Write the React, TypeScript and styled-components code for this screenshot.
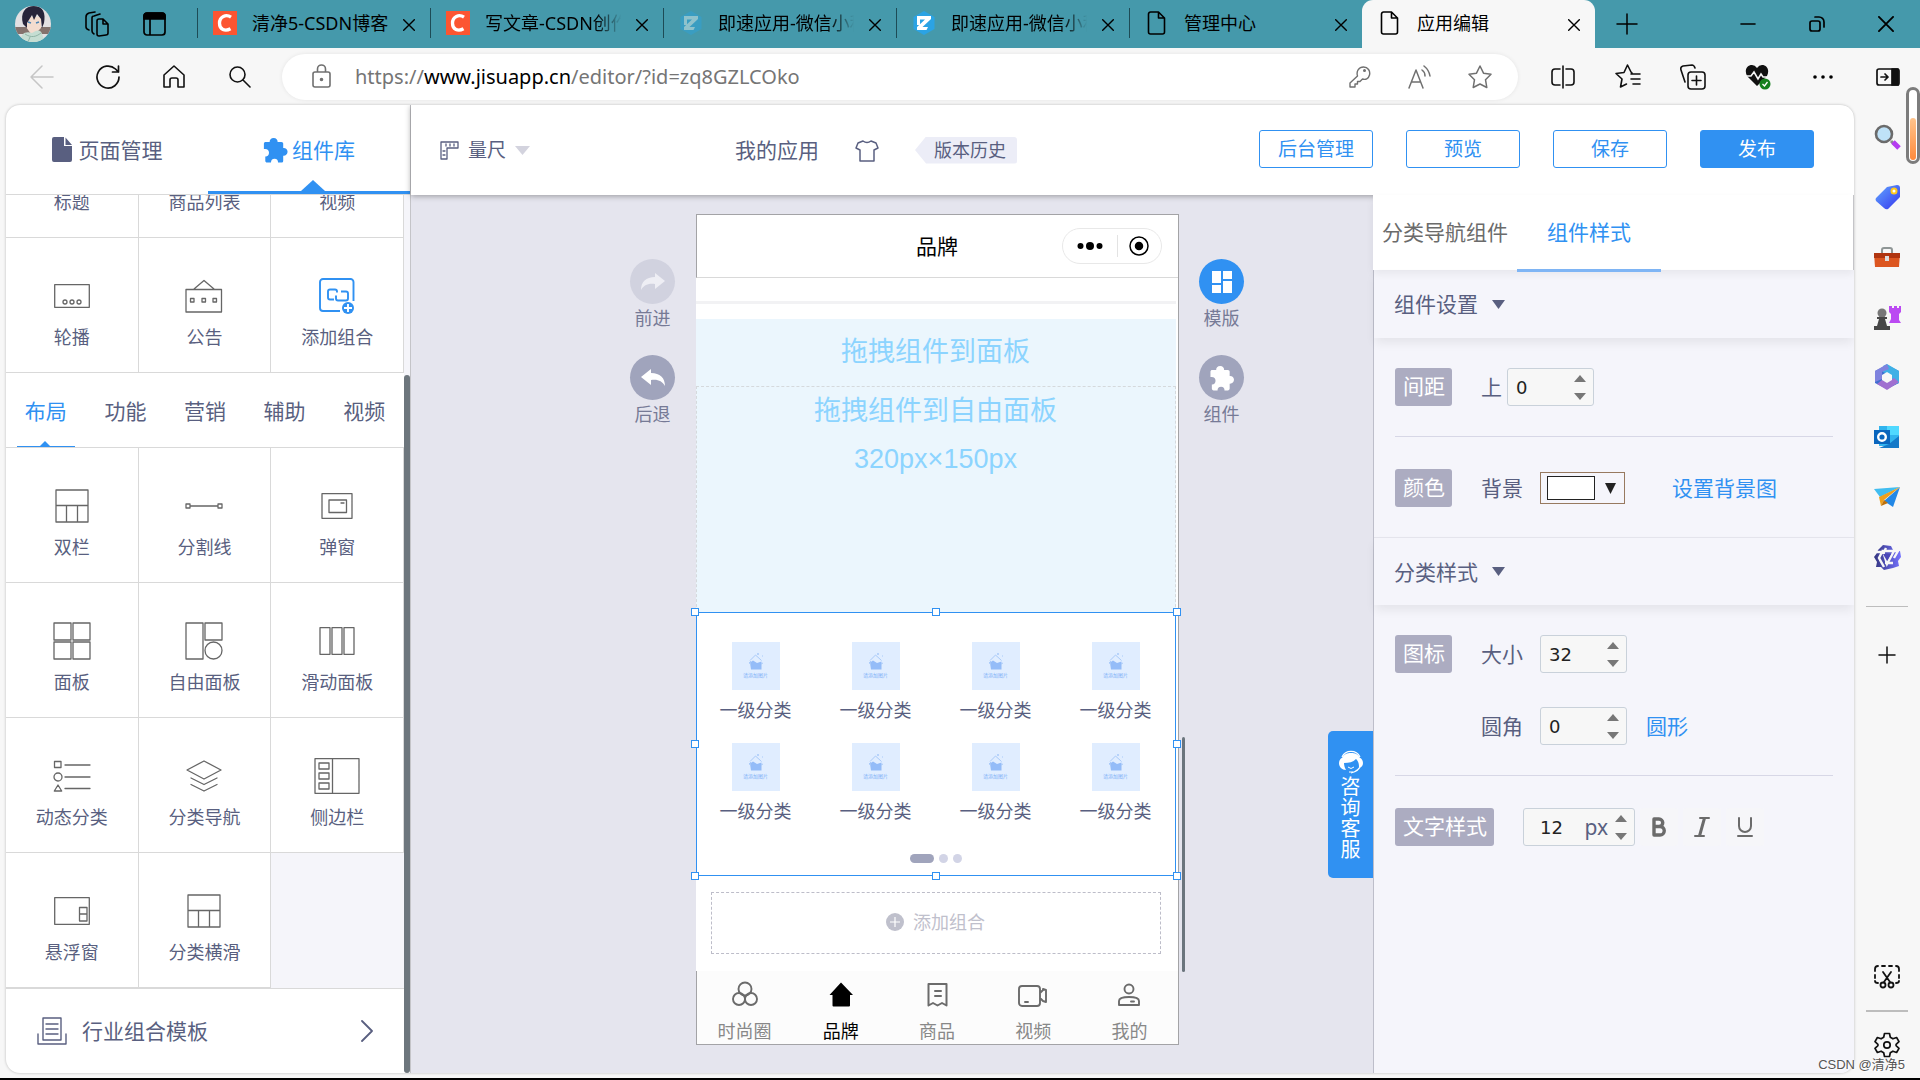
import React from "react";
import styled, { createGlobalStyle, css } from "styled-components";

const ink = "#595f80";
const blue = "#3091f2";
const line = "#d9d9d9";
const chrome = "#f7f7f7";

const GlobalStyle = createGlobalStyle`
  *, *::before, *::after { box-sizing: border-box; }
  html, body { margin: 0; padding: 0; }
  body {
    font-family: "Noto Sans", "Noto Sans CJK SC", sans-serif;
    font-size: 18px;
    color: ${ink};
    background: ${chrome};
  }
  button, input { font: inherit; color: inherit; }
  button { background: none; border: 0; padding: 0; cursor: pointer; }
  a { text-decoration: none; }
  svg { display: block; flex: none; }
`;

/* ---------- browser frame ---------- */

const Page = styled.div`
  height: 100vh;
  display: flex;
  flex-direction: column;
  overflow: hidden;
  position: relative;
  border-bottom: 2px solid #000;
`;

const TabStrip = styled.header`
  height: 48px;
  flex: none;
  display: flex;
  background: #4599ab;
  color: #000;
`;

const Profile = styled.div`
  width: 197px;
  flex: none;
  display: flex;
  align-items: center;
  gap: 34px;
  padding-left: 15px;
`;

const BrowserTab = styled.div<{ $active?: boolean; $plain?: boolean }>`
  flex: 0 1 233px;
  min-width: 0;
  position: relative;
  display: flex;
  align-items: center;
  padding: 0 11px 2px 16px;
  &::before {
    content: "";
    width: 1px;
    height: 30px;
    position: absolute;
    left: 0;
    background: ${(p) => (p.$plain ? "transparent" : "#1d4b56")};
  }
  ${(p) =>
    p.$active &&
    css`
      background: ${chrome};
      border-radius: 11px 11px 0 0;
    `}
`;

const TabTitle = styled.span<{ $fade?: boolean }>`
  flex: 1;
  min-width: 0;
  margin-left: 15px;
  line-height: 26px;
  white-space: nowrap;
  overflow: hidden;
  ${(p) => p.$fade && css`mask-image: linear-gradient(90deg, #000 80%, transparent 98%);`}
`;

const TabClose = styled.button`
  width: 20px;
  height: 20px;
  margin: 3px 0 0 8px;
  display: grid;
  place-items: center;
`;

const WindowButtons = styled.div`
  flex: 1;
  display: flex;
  align-items: center;
  justify-content: flex-end;
  button { width: 69px; height: 46px; display: grid; place-items: center; }
  button:first-child { width: 64px; margin-right: auto; }
`;

const Toolbar = styled.nav`
  height: 57px;
  flex: none;
  display: flex;
  align-items: center;
  padding-left: 9px;
  background: ${chrome};
  color: #000;
`;

const ToolButton = styled.button<{ $muted?: boolean }>`
  width: 66px;
  height: 46px;
  display: grid;
  place-items: center;
  color: ${(p) => (p.$muted ? "#c6c6c6" : "#111")};
`;

const ToolGroup = styled.div`
  display: flex;
  ${ToolButton} { width: 65px; }
`;

const AddressBar = styled.div`
  flex: 1;
  min-width: 0;
  height: 46px;
  margin: 0 12px 0 9px;
  padding: 0 8px 0 28px;
  display: flex;
  align-items: center;
  border-radius: 23px;
  background: #fff;
  color: #707070;
  box-shadow: 0 0 4px rgba(0, 0, 0, 0.08);
  button { width: 60px; height: 40px; display: grid; place-items: center; }
`;

const Url = styled.a`
  flex: 1;
  margin-left: 22px;
  font-size: 20px;
  line-height: 28px;
  color: #757575;
  b { font-weight: 400; color: #000; }
`;

const Viewport = styled.div`
  flex: 1;
  min-height: 0;
  display: flex;
`;

const EdgeBar = styled.aside`
  width: 66px;
  flex: none;
  padding: 2px 0 3px;
  display: flex;
  flex-direction: column;
  align-items: center;
  color: #111;
  hr { width: 42px; height: 1px; margin: 19px 0 18px; border: 0; background: #bdbdbd; flex: none; }
`;

const EdgeButton = styled.button`
  width: 60px;
  height: 60px;
  flex: none;
  display: grid;
  place-items: center;
`;

const EdgeBottom = styled.div`
  margin-top: auto;
  display: flex;
  flex-direction: column;
  align-items: center;
  hr { height: 2px; margin: 3px 0; }
`;

const ScrollPill = styled.div`
  position: absolute;
  right: 0;
  top: 87px;
  width: 14px;
  height: 77px;
  padding: 28px 1px 1px;
  border: 3px solid #7c7c7c;
  border-radius: 7px;
  background: #fff;
  &::after {
    content: "";
    display: block;
    height: 100%;
    border-radius: 3px;
    background: linear-gradient(#ffc48c, #ff8a3c);
  }
`;

const Watermark = styled.span`
  position: absolute;
  z-index: 5;
  right: 15px;
  bottom: 3px;
  font: 13px/20px "Liberation Sans", "Noto Sans CJK SC", sans-serif;
  color: #555;
  text-shadow: 0 0 2px #fff, 1px 1px 1px #fff;
`;

/* ---------- editor ---------- */

const Editor = styled.main`
  flex: 1;
  min-width: 0;
  margin: 0 0 5px 6px;
  display: flex;
  overflow: hidden;
  border-radius: 14px;
  background: #fff;
  box-shadow: 0 0 3px rgba(0, 0, 0, 0.25);
`;

const Library = styled.section`
  width: 405px;
  flex: none;
  display: flex;
  flex-direction: column;
  position: relative;
  border-right: 1px solid #c4c4c8;
`;

const LibraryTabs = styled.div`
  height: 90px;
  flex: none;
  display: flex;
  border-bottom: 1px solid ${line};
`;

const LibraryTab = styled.button<{ $active?: boolean }>`
  flex: 1;
  position: relative;
  display: flex;
  align-items: center;
  justify-content: center;
  gap: 6px;
  font-size: 21px;
  line-height: 30px;
  color: ${(p) => (p.$active ? blue : ink)};
  ${(p) =>
    p.$active &&
    css`
      gap: 4px;
      border-bottom: 3px solid ${blue};
      padding-top: 3px;
      &::after {
        content: "";
        position: absolute;
        bottom: 0;
        left: calc(50% - 8px);
        border: 12px solid transparent;
        border-top-width: 0;
        border-bottom: 11px solid ${blue};
      }
    `}
`;

const LibraryBody = styled.div`
  flex: 1;
  min-height: 0;
  display: flex;
  flex-direction: column;
  justify-content: flex-end;
  overflow: hidden;
  padding-right: 6px;
  background: #f5f5fa;
`;

const TileGrid = styled.div`
  flex: none;
  display: grid;
  grid-template-columns: repeat(3, 1fr);
  grid-auto-rows: 135px;
`;

const Tile = styled.button`
  display: flex;
  flex-direction: column;
  align-items: center;
  padding-top: 35px;
  background: #fff;
  border: solid ${line};
  border-width: 0 1px 1px 0;
  line-height: 26px;
`;

const TileIcon = styled.span`
  height: 46px;
  margin-bottom: 5px;
  display: grid;
  place-items: center;
  color: #666;
`;

const Kinds = styled.div`
  height: 75px;
  flex: none;
  display: grid;
  grid-template-columns: repeat(5, 1fr);
  background: #fff;
  border-bottom: 1px solid ${line};
`;

const Kind = styled.button<{ $active?: boolean }>`
  position: relative;
  padding-top: 2px;
  font-size: 21px;
  line-height: 30px;
  color: ${(p) => (p.$active ? blue : ink)};
  ${(p) =>
    p.$active &&
    css`
      &::before {
        content: "";
        position: absolute;
        left: 11px;
        right: 11px;
        bottom: 0;
        height: 1px;
        background: ${blue};
      }
      &::after {
        content: "";
        position: absolute;
        bottom: 0;
        left: calc(50% - 7px);
        border: 6px solid transparent;
        border-top-width: 0;
        border-bottom-color: ${blue};
      }
    `}
`;

const IndustryLink = styled.a`
  height: 85px;
  flex: none;
  display: flex;
  align-items: center;
  gap: 15px;
  margin-right: 6px;
  padding: 0 31px 1px 31px;
  border-top: 1px solid ${line};
  font-size: 21px;
  line-height: 30px;
  color: ${ink};
  svg:last-child { margin-left: auto; }
`;

const LibraryScroll = styled.div`
  position: absolute;
  right: 0;
  top: 270px;
  bottom: 0;
  width: 6px;
  border-radius: 3px;
  background: #6d767d;
`;

const Stage = styled.div`
  flex: 1;
  min-width: 0;
  display: flex;
  flex-direction: column;
`;

const TopBar = styled.div`
  height: 90px;
  flex: none;
  position: relative;
  z-index: 1;
  display: flex;
  align-items: center;
  padding: 0 40px 0 29px;
  background: #fff;
  box-shadow: 0 1px 6px rgba(0, 0, 0, 0.35);
`;

const RulerButton = styled.button`
  display: flex;
  align-items: center;
  gap: 9px;
  font-size: 19px;
  line-height: 28px;
`;

const AppName = styled.span`
  margin: 0 36px 0 205px;
  font-size: 21px;
  line-height: 30px;
`;

const HistoryTag = styled.button`
  height: 27px;
  margin-left: 36px;
  padding: 0 11px 0 19px;
  line-height: 24px;
  background: #ecedf7;
  border-radius: 3px;
  clip-path: polygon(0 50%, 11px 0, 100% 0, 100% 100%, 11px 100%);
`;

const Actions = styled.div`
  margin-left: auto;
  padding-bottom: 2px;
  display: flex;
  gap: 33px;
`;

const ActionButton = styled.button<{ $primary?: boolean }>`
  width: 114px;
  height: 38px;
  border: 1px solid ${blue};
  border-radius: 3px;
  font-size: 19px;
  line-height: 28px;
  color: ${(p) => (p.$primary ? "#fff" : blue)};
  background: ${(p) => (p.$primary ? blue : "#fff")};
`;

const Workspace = styled.div`
  flex: 1;
  min-height: 0;
  display: flex;
`;

const Canvas = styled.div`
  flex: 1;
  min-width: 0;
  position: relative;
  display: flex;
  justify-content: center;
  align-items: flex-start;
  gap: 20px;
  padding: 19px 0 0 90px;
  background: #e5e5ee;
`;

const SideTools = styled.div`
  width: 46px;
  padding-top: 45px;
  display: flex;
  flex-direction: column;
  gap: 22px;
`;

const SideTool = styled.button`
  display: flex;
  flex-direction: column;
  align-items: center;
  font-size: 18px;
  line-height: 29px;
  color: #767a96;
`;

const Round = styled.span<{ $bg: string }>`
  width: 45px;
  height: 45px;
  display: grid;
  place-items: center;
  border-radius: 50%;
  background: ${(p) => p.$bg};
  color: #fff;
`;

const Phone = styled.div`
  width: 483px;
  flex: none;
  position: relative;
  background: #fff;
  border: 1px solid #a3a3a6;
  border-left: 0;
`;

const PhoneHeader = styled.div`
  height: 63px;
  display: grid;
  grid-template-columns: 1fr auto 1fr;
  align-items: center;
  padding-right: 16px;
  border-left: 1px solid #a3a3a6;
  border-bottom: 1px solid ${line};
  font-size: 21px;
  line-height: 30px;
  color: #000;
  h1 { grid-column: 2; margin: 0 0 0 16px; font: inherit; }
`;

const Capsule = styled.div`
  justify-self: end;
  width: 100px;
  height: 36px;
  display: flex;
  align-items: center;
  border: 1px solid #e8e8e8;
  border-radius: 18px;
  button { flex: 1; display: grid; place-items: center; }
  button + button { border-left: 1px solid #e3e3e3; height: 22px; flex: 0 0 44px; }
`;

const PhoneBody = styled.div`
  padding-right: 2px;
`;

const Spacer = styled.div`
  height: 41px;
  padding-top: 23px;
  &::after { content: ""; display: block; height: 3px; background: #f2f2f4; }
`;

const DropPanel = styled.div`
  height: 67px;
  padding-top: 13px;
  background: #ebf6fd;
  font: 27px/40px "Liberation Sans", "Noto Sans CJK SC", sans-serif;
  color: #8cd4ff;
  text-align: center;
`;

const FreePanel = styled.div`
  height: 226px;
  border: 1px dashed #d5d9dc;
  border-bottom: 0;
  background: #ebf6fd;
  font: 27px/48px "Liberation Sans", "Noto Sans CJK SC", sans-serif;
  color: #8cd4ff;
  text-align: center;
  p { margin: 0; }
`;

const Selection = styled.div`
  position: relative;
  height: 264px;
  padding-top: 29px;
  border: 1px solid ${blue};
`;

const HandleLayer = styled.div`
  position: absolute;
  inset: -1px -2px;
`;

const Handle = styled.i<{ $x: number; $y: number }>`
  position: absolute;
  left: ${(p) => p.$x}%;
  top: ${(p) => p.$y}%;
  width: 8px;
  height: 8px;
  margin: -4px;
  background: #fff;
  border: 1px solid ${blue};
`;

const CategoryGrid = styled.ul`
  list-style: none;
  margin: 0 -1px;
  padding: 0;
  display: grid;
  grid-template-columns: repeat(4, 1fr);
  grid-auto-rows: 101px;
  li { display: flex; flex-direction: column; align-items: center; gap: 7px; line-height: 26px; }
`;

const Placeholder = styled.span`
  width: 48px;
  height: 48px;
  padding-top: 10px;
  display: flex;
  flex-direction: column;
  align-items: center;
  background: #e0edff;
  font-size: 5px;
  line-height: 8px;
  color: #7fb0f7;
`;

const Pager = styled.div`
  margin-top: 10px;
  display: flex;
  justify-content: center;
  gap: 5px;
  i { width: 9px; height: 9px; border-radius: 5px; background: #d2d4e6; }
  i:first-child { width: 24px; background: #a0a4bc; }
`;

const AddGroup = styled.button`
  width: calc(100% - 30px);
  height: 62px;
  margin: 16px 15px 17px;
  display: flex;
  align-items: center;
  justify-content: center;
  gap: 9px;
  padding-bottom: 2px;
  border: 1px dashed #bdbdc9;
  line-height: 26px;
  color: #bfc0cc;
`;

const PhoneNav = styled.nav`
  height: 73px;
  display: grid;
  grid-template-columns: repeat(5, 1fr);
  background: #fcfcfc;
  border-left: 1px solid #a3a3a6;
`;

const PhoneNavItem = styled.a<{ $active?: boolean }>`
  padding-top: 9px;
  display: flex;
  flex-direction: column;
  align-items: center;
  gap: 8px;
  line-height: 26px;
  color: ${(p) => (p.$active ? "#000" : "#888")};
  svg { color: ${(p) => (p.$active ? "#000" : "#6b6b6b")}; }
`;

const PhoneScroll = styled.div`
  position: absolute;
  right: -7px;
  top: 522px;
  bottom: 72px;
  width: 3px;
  border-radius: 2px;
  background: #6b757d;
`;

const Support = styled.button`
  position: absolute;
  right: 0;
  top: 536px;
  width: 45px;
  height: 147px;
  display: flex;
  flex-direction: column;
  align-items: center;
  justify-content: center;
  gap: 2px;
  border-radius: 5px 0 0 5px;
  background: ${blue};
  color: #fff;
  font-size: 20px;
  line-height: 21px;
  span { width: 20px; }
`;

/* ---------- property panel ---------- */

const Panel = styled.aside`
  width: 481px;
  flex: none;
  position: relative;
  z-index: 2;
  display: flex;
  flex-direction: column;
  background: #f5f5fb;
  border-left: 1px solid #bdbeca;
`;

const PanelTabs = styled.div`
  height: 75px;
  display: flex;
  margin-left: -1px;
  background: #fff;
  border-right: 1px solid #c4c4c8;
  box-shadow: 0 4px 8px rgba(0, 0, 0, 0.06);
`;

const PanelTab = styled.button<{ $active?: boolean }>`
  width: 144px;
  height: 77px;
  font-size: 21px;
  line-height: 30px;
  white-space: nowrap;
  color: ${(p) => (p.$active ? blue : "#6b6b6b")};
  border-bottom: 3px solid ${(p) => (p.$active ? "#7fb5f5" : "transparent")};
`;

const SectionTitle = styled.h2`
  height: 68px;
  margin: 0;
  padding: 0 0 0 20px;
  display: flex;
  align-items: center;
  gap: 14px;
  font-size: 21px;
  font-weight: 400;
  line-height: 30px;
  box-shadow: 0 6px 10px -1px rgba(0, 0, 0, 0.07);
`;

const Section = styled.div`
  & + & ${SectionTitle} { border-top: 1px solid #e4e4ec; }
`;

const Group = styled.div`
  margin: 0 21px;
  padding: 30px 0;
  display: flex;
  flex-direction: column;
  gap: 34px;
  & + & { padding-top: 32px; border-top: 1px solid #d7d7e6; }
`;

const Row = styled.div<{ $indent?: boolean }>`
  height: 38px;
  display: flex;
  align-items: center;
  padding-left: ${(p) => (p.$indent ? 86 : 0)}px;
  font-size: 21px;
  line-height: 30px;
`;

const Tag = styled.span`
  height: 38px;
  margin-right: 29px;
  padding: 3px 7px 3px 8px;
  border-radius: 3px;
  background: #acacc1;
  color: #fff;
`;

const FieldLabel = styled.label<{ $tight?: boolean }>`
  margin-right: ${(p) => (p.$tight ? 5 : 17)}px;
`;

const Field = styled.span<{ $wide?: boolean }>`
  width: ${(p) => (p.$wide ? 112 : 87)}px;
  height: 38px;
  display: flex;
  align-items: center;
  padding: 0 7px 0 ${(p) => (p.$wide ? 16 : 8)}px;
  border: 1px solid #c9d1da;
  border-radius: 3px;
  background: #f7f7f7;
  input {
    flex: 1;
    width: 0;
    min-width: 0;
    padding: 2px 0 0;
    border: 0;
    outline: 0;
    background: none;
    font: 18px/24px "DejaVu Sans", sans-serif;
    color: #222;
  }
`;

const Spinner = styled.span`
  display: flex;
  flex-direction: column;
  gap: 11px;
  margin-left: 7px;
`;

const ColorPicker = styled.button`
  width: 85px;
  height: 32px;
  padding: 0 8px 0 6px;
  display: flex;
  align-items: center;
  justify-content: space-between;
  border: 1px solid #97795f;
  i { width: 48px; height: 24px; border: 1px solid #222; background: #fff; }
`;

const TextLink = styled.a<{ $near?: boolean }>`
  margin-left: ${(p) => (p.$near ? 19 : 47)}px;
  color: ${blue};
`;

const FormatButton = styled.button`
  width: 38px;
  height: 38px;
  margin-left: 5px;
  display: grid;
  place-items: center;
  border-radius: 3px;
  background: #f6f6f9;
  color: #6b6b6b;
`;

/* ---------- icons ---------- */

type IconProps = { w: number; h?: number; box?: string; sw?: number; children: React.ReactNode };

const Icon = ({ w, h = w, box, sw = 1.5, children }: IconProps) => (
  <svg
    width={w}
    height={h}
    viewBox={box ?? `0 0 ${w} ${h}`}
    fill="none"
    stroke="currentColor"
    strokeWidth={sw}
    strokeLinecap="round"
    strokeLinejoin="round"
    aria-hidden="true"
  >
    {children}
  </svg>
);

const Cross = ({ size = 12 }: { size?: number }) => (
  <Icon w={size} box="0 0 12 12" sw={1.4}>
    <path d="M.7.7l10.6 10.6M11.3.7L.7 11.3" />
  </Icon>
);

const Caret = ({ w = 13, h = 9, color = ink, up = false }: { w?: number; h?: number; color?: string; up?: boolean }) => (
  <svg width={w} height={h} viewBox="0 0 10 10" preserveAspectRatio="none" aria-hidden="true">
    <path d={up ? "M0 10h10L5 0z" : "M0 0h10L5 10z"} fill={color} />
  </svg>
);

const Puzzle = ({ w = 26, h = 28 }: { w?: number; h?: number }) => (
  <svg width={w} height={h} viewBox="0 0 26 28" fill="currentColor" aria-hidden="true">
    <path d="M11 1c2.800 0 4.500 2 4.300 4.300h4c1.300 0 2 .8 2 2v4.500C23.800 11.500 26 13.300 26 16s-2.200 4.500-4.700 4.200v5.300c0 1.300-.8 2-2 2h-3.600c.2-2.300-1.200-4-3.700-4s-4 1.700-3.800 4H4c-1.300 0-2-.8-2-2V21c2.300.2 4-1.200 4-4s-1.800-4.500-5.500-4V7.300c0-1.300.8-2 2-2h4.200C6.500 3 8.200 1 11 1z" />
  </svg>
);

const PageIcon = () => (
  <Icon w={24} h={26} box="-2 0 24 26" sw={1.6}>
    <path d="M3.500 2h8l6 6v14a2 2 0 0 1-2 2h-12a2 2 0 0 1-2-2V4a2 2 0 0 1 2-2zM11.500 2v6h6" />
  </Icon>
);

const CsdnIcon = () => (
  <svg width="24" height="24" viewBox="0 0 24 24" aria-hidden="true">
    <path d="M0 0h24v24H0z" fill="#fc5531" />
    <path d="M18 6.200c-5-3.400-11.500-.6-11.500 6 0 6.300 5.500 8.600 11 5.600" fill="none" stroke="#fff" strokeWidth="3.300" />
  </svg>
);

const JisuIcon = ({ dim = false }: { dim?: boolean }) => (
  <svg width="24" height="24" viewBox="0 0 24 24" opacity={dim ? 0.4 : 1} aria-hidden="true">
    <path d="M12 0l10.500 6v12L12 24 1.500 18V6z" fill="#2ba3e4" />
    <path d="M5 5h14v3L10.500 16H16l-1.500 3H5v-3l8-7.500H8V14H5z" fill="#fff" />
  </svg>
);

const Avatar = () => (
  <svg width="36" height="36" viewBox="0 0 36 36" aria-hidden="true">
    <clipPath id="face"><circle cx="18" cy="18" r="18" /></clipPath>
    <g clipPath="url(#face)">
      <path d="M0 0h36v36H0z" fill="#e3e0e2" />
      <path d="M0 21h36v7H0z" fill="#84726d" />
      <path d="M11 11h15v11l-6 6h-4l-5-7z" fill="#f3dccf" />
      <path d="M8 18C5 7 10 0 19 0c9 0 12 7 10 17l-2 5-1-9-4-5-3 6-2-5-5 8 0 5z" fill="#28243a" />
      <path d="M13 16l3 1M21 17l3-1" stroke="#4c85b5" strokeWidth="1.500" />
      <path d="M6 36c-1-9 5-11 11-9 6-4 9-3 10 1l3 8z" fill="#c5ddd2" />
      <path d="M10 28c6 4 11 3 16-1M15 31l-2 5" stroke="#8fb3a5" fill="none" />
    </g>
  </svg>
);

const tileArt: Record<string, React.ReactNode> = {
  carousel: (
    <Icon w={36} h={24} sw={1.3}><path d="M.7.7h34.600v22.600H.7z" /><circle cx="11" cy="18" r="2" /><circle cx="18" cy="18" r="2" /><circle cx="25" cy="18" r="2" /></Icon>
  ),
  notice: (
    <Icon w={38} h={34} sw={1.3}><path d="M1 10.500h35.500V33H1zM9 10L19 1.500 29 10M5.500 19.500h3.500V23H5.500zM17 19.500h3.500V23H17zM28 19.500h3.500V23H28z" /></Icon>
  ),
  group: (
    <svg width="36" height="36" viewBox="0 0 36 36" fill="none" stroke={blue} strokeWidth="1.900" aria-hidden="true">
      <path d="M34.500 23V4a3 3 0 0 0-3-3H4a3 3 0 0 0-3 3v26a3 3 0 0 0 3 3h17" />
      <path d="M15 21.500h-4a2 2 0 0 1-2-2v-6a2 2 0 0 1 2-2h5a2 2 0 0 1 2 2v1M22 13.500h5a2 2 0 0 1 2 2v5a2 2 0 0 1-2 2h-8a2 2 0 0 1-2-2v-3" />
      <circle cx="29" cy="30" r="6" fill={blue} stroke="none" />
      <path d="M29 26v8M25 30h8" stroke="#fff" />
    </svg>
  ),
  columns: (
    <Icon w={34} h={34} sw={1.3}><path d="M1 1h32v32H1zM1 16.500h32M11.500 16.500V33M22.500 16.500V33" /></Icon>
  ),
  divider: (
    <Icon w={38} h={8} sw={1.3}><path d="M1 2h4v4H1zM33 2h4v4h-4zM5 4h28" /></Icon>
  ),
  popup: (
    <Icon w={32} h={26} sw={1.3}><path d="M1 .7h30v24.600H1zM8 7h17.500v12.500H8zM20 10h3" /></Icon>
  ),
  panel: (
    <Icon w={38} h={38} sw={1.3}><path d="M1 1h17v17H1zM20 1h17v17H20zM1 20h17v17H1zM20 20h17v17H20z" /></Icon>
  ),
  free: (
    <Icon w={38} h={38} sw={1.3}><path d="M1 1h17v36H1zM20 1h17v17H20z" /><circle cx="28.500" cy="28.500" r="8.500" /></Icon>
  ),
  slide: (
    <Icon w={36} h={28} sw={1.3}><path d="M1 .7h10v26.600H1zM13 .7h10v26.600H13zM25 .7h10v26.600H25z" /></Icon>
  ),
  dynamic: (
    <Icon w={38} h={32} sw={1.300}><path d="M1.500 1.500h6.500v6H1.500zM12 5h25M12 17h25M12 28.500h25M5 25l3.700 6H1.300z" /><circle cx="5" cy="17" r="4" /></Icon>
  ),
  layers: (
    <Icon w={36} h={32} sw={1.3}><path d="M18 1l17 9-17 9L1 10zM5 18l13 6.500L31 18M5 24.500L18 31l13-6.500" /></Icon>
  ),
  sidebar: (
    <Icon w={46} h={36} sw={1.3}><path d="M1 .7h44v34.600H1zM18.500.7v34.600M5 5h10v6H5zM5 15h10v6H5zM5 25h10v6H5z" /></Icon>
  ),
  float: (
    <Icon w={36} h={28} sw={1.3}><path d="M.7.7h34.600v26.600H.7zM25.500 10.500H33v13.500h-7.500zM25.500 17H33" /></Icon>
  ),
};

const Bag = () => (
  <svg width="16" height="19" viewBox="0 0 16 19" aria-hidden="true">
    <path d="M2 8.500L7.500 3l6 5.500M10 1v2M9 2h2M14 4h1" fill="none" stroke="#a9caf9" />
    <path d="M2 10.500l3-2 4 2.500 4.500-1.500v8H3z" fill="#94bcf8" />
    <path d="M3 12l-2-1 2-2M13 12l2-1" fill="none" stroke="#a9caf9" />
  </svg>
);

/* ---------- data ---------- */

const browserTabs = [
  { title: "清净5-CSDN博客", icon: <CsdnIcon /> },
  { title: "写文章-CSDN创作中心", icon: <CsdnIcon />, fade: true },
  { title: "即速应用-微信小程序", icon: <JisuIcon dim />, fade: true },
  { title: "即速应用-微信小程序", icon: <JisuIcon />, fade: true },
  { title: "管理中心", icon: <PageIcon /> },
  { title: "应用编辑", icon: <PageIcon />, active: true },
];

const topTiles = [
  ["标题", "columns"], ["商品列表", "panel"], ["视频", "popup"],
  ["轮播", "carousel"], ["公告", "notice"], ["添加组合", "group"],
];

const layoutTiles = [
  ["双栏", "columns"], ["分割线", "divider"], ["弹窗", "popup"],
  ["面板", "panel"], ["自由面板", "free"], ["滑动面板", "slide"],
  ["动态分类", "dynamic"], ["分类导航", "layers"], ["侧边栏", "sidebar"],
  ["悬浮窗", "float"], ["分类横滑", "columns"],
];

const phoneNav = [
  { label: "时尚圈", art: <Icon w={30} sw={1.900}><circle cx="15" cy="9" r="6.500" /><circle cx="9" cy="19" r="6" /><circle cx="21" cy="19" r="6" /></Icon> },
  { label: "品牌", active: true, art: <svg width="30" height="30" viewBox="0 0 30 30" aria-hidden="true"><path d="M15 2.500L27 15h-3v10.500a1 1 0 0 1-1 1H7.500a1 1 0 0 1-1-1V15H3.500z" /></svg> },
  { label: "商品", art: <Icon w={30} sw={2}><path d="M6.500 4h18v21.500L20 23l-4.500 2.500L11 23l-4.500 2.500zM13 11h6M13 16h6" /></Icon> },
  { label: "视频", art: <Icon w={30} sw={1.900}><path d="M4 6h15a3 3 0 0 1 3 3v14a3 3 0 0 1-3 3H4a3 3 0 0 1-3-3V9a3 3 0 0 1 3-3zM22 13l3-3v-1l3 1v12l-3-1-3-3M7 22h3" /></Icon> },
  { label: "我的", art: <Icon w={30} sw={1.900}><circle cx="15" cy="9" r="4.500" /><path d="M5 25v-4c0-3 5-4 10-4s10 1 10 4v4zM17 21.500h3" /></Icon> },
];

const handles = [[0, 0], [50, 0], [100, 0], [0, 50], [100, 50], [0, 100], [50, 100], [100, 100]];

const edgeIcons = [
  { name: "Search", art: <g><circle cx="11" cy="11" r="8" fill="#bfe2f8" stroke="#6b6b6b" strokeWidth="2.600" /><path d="M18 18l4 4" stroke="#8d8d8d" strokeWidth="3" /><path d="M20 19l6 6" stroke="#b43cf0" strokeWidth="5" /></g> },
  { name: "Shopping", art: <g><path d="M3 15L14 4l10-2q3 0 3 3v9L15 26q-2 1-4-1l-8-7q-1-2 0-3z" fill="url(#tagFill)" /><circle cx="21" cy="8" r="2.500" fill="#fff" stroke="#ffc81e" strokeWidth="2" /></g> },
  { name: "Tools", art: <g><path d="M9 10V7q0-2 2-2h6q2 0 2 2v3" fill="none" stroke="#8f9696" strokeWidth="2" /><path d="M1 10h26l-1 14H2z" fill="#dc5620" /><path d="M1 10h26v5H1z" fill="#b03510" /><path d="M12 13h4v5h-4z" fill="#ddd" /></g> },
  { name: "Games", art: <g><path d="M16 3h3v2h2V3h3v2h2V3h2v6l-2 2v6l2 3H16l2-4v-5l-2-2z" fill="#bb4af2" /><circle cx="9" cy="10" r="4.500" fill="#777" /><path d="M4 14h10v2h-2l2 7h3v4H1v-4h3l2-7H4z" fill="#474747" /></g> },
  { name: "Microsoft 365", art: <g><path d="M14 2l12 6v12l-12 6-12-6V8z" fill="#3f6fd0" /><path d="M10 3l4-2 12 7v12l-7 2v-9l-9-4z" fill="#3eb0e6" /><path d="M14 1L2 8v11l7-3V9l7-3z" fill="#7f83de" /><path d="M26 19l-12 8L4 21l5-4 5 2 7-4z" fill="#a070d0" /><path d="M14 9l5 3v5l-5 3-5-3v-5z" fill="#f7f7f7" /></g> },
  { name: "Outlook", art: <g><path d="M6 3h20v20H6z" fill="#31b4ee" /><path d="M14 3h12v9H14z" fill="#50d9ff" /><path d="M6 25h20V13l-10 8z" fill="#1479c8" /><path d="M1 7h16v14H1z" fill="#0a66bd" /><circle cx="9" cy="14" r="3.800" fill="none" stroke="#fff" strokeWidth="2.400" /></g> },
  { name: "Drop", art: <g><path d="M1 6l26-2-20 10z" fill="#41bdf0" /><path d="M27 4L20 24l-9-6z" fill="#2388e6" /><path d="M27 4L6 14l2 9 3-6z" fill="#eea01c" /><path d="M8 23l3-6 4 3z" fill="#bd710c" /></g> },
  { name: "Designer", art: <g><path d="M5 7l5-5 8 1 2 4 7 1 1 6-3 4 1 5-6 2-9 2-3-3H3l1-5-3-5 3-4z" fill="url(#knot)" /><path d="M4 9h7l2-4M19 8h6l-4 7M11 24l-4-7M20 20h-8M9 9l-3 6 5 9M10 8h11l-7 13z" fill="none" stroke="#f7f7f7" strokeWidth="2.400" /><path d="M10 11h8l-4 7z" fill="#4a46b8" /></g> },
];

const Tiles = ({ items }: { items: string[][] }) => (
  <TileGrid>
    {items.map(([label, art]) => (
      <Tile key={label}>
        <TileIcon>{tileArt[art]}</TileIcon>
        {label}
      </Tile>
    ))}
  </TileGrid>
);

const NumberField = ({ id, value, unit }: { id: string; value: string; unit?: string }) => (
  <Field $wide={!!unit}>
    <input id={id} defaultValue={value} inputMode="numeric" aria-label={unit ? "文字大小" : undefined} />
    {unit}
    <Spinner>
      <Caret up w={12} h={7} color="#777" />
      <Caret w={12} h={7} color="#777" />
    </Spinner>
  </Field>
);

export default function App() {
  return (
    <Page>
      <GlobalStyle />
      <TabStrip>
        <Profile>
          <Avatar />
          <Icon w={24} h={28} sw={1.600}>
            <path d="M14 9h4l5 5v9q0 2-2 2l-7 1q-2 0-2-2V11q0-2 2-2zM18 9v5h5M9 24q-2-1-2-3V8q0-2 2-2l6-2M4 20q-3-1-3-3V7q0-3 3-4l6-1" />
          </Icon>
          <Icon w={24} h={26} sw={1.700}>
            <path d="M4 2h15a3 3 0 0 1 3 3v16a3 3 0 0 1-3 3H4a3 3 0 0 1-3-3V5a3 3 0 0 1 3-3zM7 8v16" />
            <path d="M1 8V5a3 3 0 0 1 3-3h15a3 3 0 0 1 3 3v3z" fill="currentColor" />
          </Icon>
        </Profile>
        {browserTabs.map((t, i) => (
          <BrowserTab key={i} $active={t.active} $plain={t.active}>
            {t.icon}
            <TabTitle $fade={t.fade}>{t.title}</TabTitle>
            <TabClose aria-label="关闭标签页"><Cross /></TabClose>
          </BrowserTab>
        ))}
        <WindowButtons>
          <button aria-label="新建标签页"><Icon w={22} sw={1.500}><path d="M11 1v20M1 11h20" /></Icon></button>
          <button aria-label="最小化"><Icon w={16} sw={1.600}><path d="M1 8h14" /></Icon></button>
          <button aria-label="还原"><Icon w={16} sw={1.700}><path d="M3 5h6a2 2 0 0 1 2 2v6a2 2 0 0 1-2 2H3a2 2 0 0 1-2-2V7a2 2 0 0 1 2-2zM6 1h4a5 5 0 0 1 5 5v5" /></Icon></button>
          <button aria-label="关闭"><Cross size={16} /></button>
        </WindowButtons>
      </TabStrip>

      <Toolbar>
        <ToolButton $muted aria-label="后退"><Icon w={24}><path d="M23 12H1M12 1L1 12l11 11" /></Icon></ToolButton>
        <ToolButton aria-label="刷新"><Icon w={26} sw={1.700}><path d="M24 13a11 11 0 1 1-3.500-8L23.500 8M23.500 2v6h-6" /></Icon></ToolButton>
        <ToolButton aria-label="主页"><Icon w={24} sw={1.600}><path d="M2 10L12 1l10 9v12h-6v-7a2 2 0 0 0-2-2h-4a2 2 0 0 0-2 2v7H2z" /></Icon></ToolButton>
        <ToolButton aria-label="搜索"><Icon w={22} sw={1.600}><circle cx="8.500" cy="8.500" r="7.500" /><path d="M14 14l7 7" /></Icon></ToolButton>
        <AddressBar>
          <Icon w={23} h={26} box="-2 0 23 26" sw={1.600}><path d="M3 8h13a2 2 0 0 1 2 2v11a2 2 0 0 1-2 2H3a2 2 0 0 1-2-2V10a2 2 0 0 1 2-2zM5.500 8V5a4 4 0 0 1 8 0v3" /><circle cx="9.500" cy="15.500" r="1" fill="currentColor" /></Icon>
          <Url href="#">https://<b>www.jisuapp.cn</b>/editor/?id=zq8GZLCOko</Url>
          <button aria-label="密码"><Icon w={22} sw={1.400}><circle cx="15.500" cy="4.500" r=".8" /><path d="M8.500 10C7 5 10 1 14.500 1s7 4 6 8-4 5-7 4L11 15.500H8.500V18H6v3H1v-4z" /></Icon></button>
          <button aria-label="朗读"><Icon w={24} sw={1.500}><path d="M1 23L8 5l7 18M3.500 17h9M14 5q3 2 3 6M16 1q5 4 6 10" /></Icon></button>
          <button aria-label="收藏"><Icon w={26} sw={1.500}><path d="M13 2l3.500 7.200 7.500 1-5.500 5.500 1.300 7.800L13 20l-6.800 3.500 1.300-7.800L2 10.200l7.500-1z" /></Icon></button>
        </AddressBar>
        <ToolGroup>
          <ToolButton aria-label="分屏"><Icon w={24} sw={1.600}><path d="M12 1v22M9 4H4a3 3 0 0 0-3 3v10a3 3 0 0 0 3 3h5M15 4h5a3 3 0 0 1 3 3v10a3 3 0 0 1-3 3h-5" /></Icon></ToolButton>
          <ToolButton aria-label="收藏夹"><Icon w={26} sw={1.600}><path d="M17 9l-1-1-3.500-7L9 8.500 1 9.500l6 5.500-1.500 8 6-3M16 10h9M16 15h9M18 20h7" /></Icon></ToolButton>
          <ToolButton aria-label="集锦"><Icon w={26} sw={1.600}><path d="M11 8h11a3 3 0 0 1 3 3v11a3 3 0 0 1-3 3H11a3 3 0 0 1-3-3V11a3 3 0 0 1 3-3zM16.500 12v9M12 16.500h9M5 18L1 6q-1-3 2-4l9-1q2 0 3 3" /></Icon></ToolButton>
          <ToolButton aria-label="性能">
            <svg width="26" height="26" viewBox="0 0 26 26" aria-hidden="true">
              <path d="M12 22L2 12C-1 6 2 1 7 1q3 0 5 3 2-3 5-3c5 0 8 5 5 11z" fill="#111" />
              <path d="M0 12h6l3-4 4 7 3-5 2 3h7" fill="none" stroke="#f7f7f7" strokeWidth="1.600" />
              <circle cx="20" cy="20" r="5.500" fill="#15801c" />
              <path d="M17.500 20l2 2 3-4" stroke="#fff" fill="none" strokeWidth="1.300" />
            </svg>
          </ToolButton>
          <ToolButton aria-label="更多"><svg width="20" height="4" viewBox="0 0 20 4" aria-hidden="true"><circle cx="2" cy="2" r="1.800" /><circle cx="10" cy="2" r="1.800" /><circle cx="18" cy="2" r="1.800" /></svg></ToolButton>
          <ToolButton aria-label="侧栏"><Icon w={24} h={20} sw={1.700}><path d="M3 2h18a2 2 0 0 1 2 2v12a2 2 0 0 1-2 2H3a2 2 0 0 1-2-2V4a2 2 0 0 1 2-2zM5 10h7M9 7l3 3-3 3" /><path d="M16 2h6v16h-6z" fill="currentColor" /></Icon></ToolButton>
        </ToolGroup>
      </Toolbar>

      <Viewport>
        <Editor>
          <Library>
            <LibraryTabs>
              <LibraryTab>
                <svg width="21" height="25" viewBox="0 0 21 25" fill={ink} aria-hidden="true"><path d="M2 0h10v9h8v14a2 2 0 0 1-2 2H2a2 2 0 0 1-2-2V2a2 2 0 0 1 2-2zM13.500.5L20 8h-6.500z" /></svg>
                页面管理
              </LibraryTab>
              <LibraryTab $active><Puzzle w={25} h={26} />组件库</LibraryTab>
            </LibraryTabs>
            <LibraryBody>
              <Tiles items={topTiles} />
              <Kinds>
                {["布局", "功能", "营销", "辅助", "视频"].map((k, i) => <Kind key={k} $active={i === 0}>{k}</Kind>)}
              </Kinds>
              <Tiles items={layoutTiles} />
            </LibraryBody>
            <IndustryLink href="#">
              <Icon w={30} h={28} sw={1.400}><path d="M6 1h18v22H6zM9 7h12M9 12h12M9 17h12M1 17v10h28V17" /></Icon>
              行业组合模板
              <Icon w={12} h={22} sw={1.800}><path d="M1 1l10 10L1 21" /></Icon>
            </IndustryLink>
            <LibraryScroll />
          </Library>

          <Stage>
            <TopBar>
              <RulerButton>
                <Icon w={19} h={19} sw={1.300}><path d="M1 1h17v6H7v11H1zM5 10H3M5 14H3M10 3v2M14 3v2M6 3v2" /></Icon>
                量尺
                <Caret w={15} h={9} color="#d3d3de" />
              </RulerButton>
              <AppName>我的应用</AppName>
              <Icon w={24} h={23} sw={1.500}><path d="M8 2q4 3 8 0l5 2 2 5-4 2v11H5V11L1 9l2-5z" /></Icon>
              <HistoryTag>版本历史</HistoryTag>
              <Actions>
                <ActionButton>后台管理</ActionButton>
                <ActionButton>预览</ActionButton>
                <ActionButton>保存</ActionButton>
                <ActionButton $primary>发布</ActionButton>
              </Actions>
            </TopBar>

            <Workspace>
              <Canvas>
                <SideTools>
                  <SideTool>
                    <Round $bg="#d1d2df"><svg width="26" height="20" viewBox="0 0 26 20" fill="#eeeef4" aria-hidden="true"><path d="M15 1l10 8-10 8v-5C8 11 4 13 1 18 1 10 6 5 15 5z" /></svg></Round>
                    前进
                  </SideTool>
                  <SideTool>
                    <Round $bg="#a0a4bc"><svg width="26" height="20" viewBox="0 0 26 20" fill="#fff" aria-hidden="true"><path d="M11 1L1 9l10 8v-5c7-1 11 1 14 6 0-8-5-13-14-13z" /></svg></Round>
                    后退
                  </SideTool>
                </SideTools>

                <Phone>
                  <PhoneHeader>
                    <h1>品牌</h1>
                    <Capsule>
                      <button aria-label="菜单"><svg width="26" height="8" viewBox="0 0 26 8" aria-hidden="true"><circle cx="3.500" cy="4" r="3" /><circle cx="13" cy="4" r="4" /><circle cx="22.500" cy="4" r="3" /></svg></button>
                      <button aria-label="退出"><Icon w={20} sw={1.500}><circle cx="10" cy="10" r="9" /><circle cx="10" cy="10" r="3.500" fill="currentColor" /></Icon></button>
                    </Capsule>
                  </PhoneHeader>
                  <PhoneBody>
                    <Spacer />
                    <DropPanel>拖拽组件到面板</DropPanel>
                    <FreePanel>
                      <p>拖拽组件到自由面板</p>
                      <p>320px×150px</p>
                    </FreePanel>
                    <Selection>
                      <CategoryGrid>
                        {Array.from({ length: 8 }, (_, i) => (
                          <li key={i}><Placeholder><Bag />请添加图片</Placeholder>一级分类</li>
                        ))}
                      </CategoryGrid>
                      <Pager><i /><i /><i /></Pager>
                      <HandleLayer>
                        {handles.map(([x, y]) => <Handle key={`${x}-${y}`} $x={x} $y={y} />)}
                      </HandleLayer>
                    </Selection>
                    <AddGroup>
                      <svg width="18" height="18" viewBox="0 0 18 18" aria-hidden="true"><circle cx="9" cy="9" r="9" fill="#bfc0cc" /><path d="M9 4v10M4 9h10" stroke="#fff" strokeWidth="1.200" /></svg>
                      添加组合
                    </AddGroup>
                  </PhoneBody>
                  <PhoneNav>
                    {phoneNav.map((n) => <PhoneNavItem key={n.label} href="#" $active={n.active}>{n.art}{n.label}</PhoneNavItem>)}
                  </PhoneNav>
                  <PhoneScroll />
                </Phone>

                <SideTools>
                  <SideTool>
                    <Round $bg={blue}><svg width="20" height="22" viewBox="0 0 20 22" fill="#fff" aria-hidden="true"><path d="M0 0h9v12H0zM11 0h9v8h-9zM0 14h9v8H0zM11 10h9v12h-9z" /></svg></Round>
                    模版
                  </SideTool>
                  <SideTool>
                    <Round $bg="#a0a4bc"><Puzzle w={24} h={26} /></Round>
                    组件
                  </SideTool>
                </SideTools>

                <Support>
                  <svg width="24" height="24" viewBox="0 0 24 24" aria-hidden="true">
                    <path d="M3 7a10 10 0 0 1 18 0M22 15q-2 6-10 8" fill="none" stroke="#fff" strokeWidth="1.200" />
                    <path d="M0 13C0 10 2 8 3 8c2-4 5-5 9-5s7 1 9 5c1 0 3 2 3 5s-2 5-4 4c0-4-1-6-3-8-3 3-7 4-12 4 0 3 1 5 2 7-4 0-7-3-7-7z" fill="#fff" />
                    <path d="M9 17q3 3 6 0M10 22h4" fill="none" stroke="#fff" />
                  </svg>
                  <span>咨询客服</span>
                </Support>
              </Canvas>

              <Panel>
                <PanelTabs>
                  <PanelTab>分类导航组件</PanelTab>
                  <PanelTab $active>组件样式</PanelTab>
                </PanelTabs>
                <Section>
                  <SectionTitle>组件设置<Caret /></SectionTitle>
                  <Group>
                    <Row>
                      <Tag>间距</Tag>
                      <FieldLabel htmlFor="top" $tight>上</FieldLabel>
                      <NumberField id="top" value="0" />
                    </Row>
                  </Group>
                  <Group>
                    <Row>
                      <Tag>颜色</Tag>
                      <FieldLabel htmlFor="bg">背景</FieldLabel>
                      <ColorPicker id="bg"><i /><Caret w={11} h={11} color="#222" /></ColorPicker>
                      <TextLink href="#">设置背景图</TextLink>
                    </Row>
                  </Group>
                </Section>
                <Section>
                  <SectionTitle>分类样式<Caret /></SectionTitle>
                  <Group>
                    <Row>
                      <Tag>图标</Tag>
                      <FieldLabel htmlFor="size">大小</FieldLabel>
                      <NumberField id="size" value="32" />
                    </Row>
                    <Row $indent>
                      <FieldLabel htmlFor="radius">圆角</FieldLabel>
                      <NumberField id="radius" value="0" />
                      <TextLink href="#" $near>圆形</TextLink>
                    </Row>
                  </Group>
                  <Group>
                    <Row>
                      <Tag>文字样式</Tag>
                      <NumberField id="font" value="12" unit="px" />
                      <FormatButton aria-label="加粗"><Icon w={16} h={20} sw={3.400}><path d="M3 2h5a3.500 3.500 0 0 1 0 7.500H3zM3 9.500h6a4 4 0 0 1 0 8.500H3z" /></Icon></FormatButton>
                      <FormatButton aria-label="斜体"><Icon w={16} h={20} sw={2}><path d="M6 1h9M1 19h9" /><path d="M10.500 1l-5 18" strokeWidth="3" /></Icon></FormatButton>
                      <FormatButton aria-label="下划线"><Icon w={16} h={20} sw={2}><path d="M2 1v8a6 6 0 0 0 12 0V1M1 19h14" /></Icon></FormatButton>
                    </Row>
                  </Group>
                </Section>
              </Panel>
            </Workspace>
          </Stage>
        </Editor>

        <EdgeBar>
          <svg width="0" height="0" aria-hidden="true">
            <linearGradient id="tagFill" x2="1" y2="1"><stop stopColor="#62a8ff" /><stop offset="1" stopColor="#3535ee" /></linearGradient>
            <linearGradient id="knot"><stop stopColor="#34357f" /><stop offset="1" stopColor="#7472ff" /></linearGradient>
          </svg>
          {edgeIcons.map((e) => (
            <EdgeButton key={e.name} aria-label={e.name}>
              <svg width="28" height="28" viewBox="0 0 28 28" aria-hidden="true">{e.art}</svg>
            </EdgeButton>
          ))}
          <hr />
          <EdgeButton aria-label="添加"><Icon w={18} sw={1.500}><path d="M9 1v16M1 9h16" /></Icon></EdgeButton>
          <EdgeBottom>
            <EdgeButton aria-label="截图"><Icon w={26} h={24} sw={1.800}><path d="M1 6V4q0-3 3-3M8 1h3M15 1h3M22 1q3 0 3 3v2M25 10v3M1 10v3M1 16q0 2 3 2M25 16q0 2-3 2M9 7l7 10M17 7l-7 10" /><circle cx="9" cy="20" r="2.500" /><circle cx="17" cy="20" r="2.500" /></Icon></EdgeButton>
            <hr />
            <EdgeButton aria-label="设置"><Icon w={26} sw={1.700}><path d="M10.500 1.500h5l.8 3.800 2.600 1.500 3.700-1.300 2.400 4.200-2.900 2.600v1.400l2.900 2.600-2.400 4.200-3.700-1.300-2.600 1.500-.8 3.800h-5l-.8-3.800-2.600-1.500-3.700 1.300L1 16.300l2.900-2.600v-1.400L1 9.700l2.400-4.200 3.700 1.300 2.600-1.500z" /><circle cx="13" cy="13" r="3.200" /></Icon></EdgeButton>
          </EdgeBottom>
        </EdgeBar>
      </Viewport>
      <ScrollPill />
      <Watermark>CSDN @清净5</Watermark>
    </Page>
  );
}
